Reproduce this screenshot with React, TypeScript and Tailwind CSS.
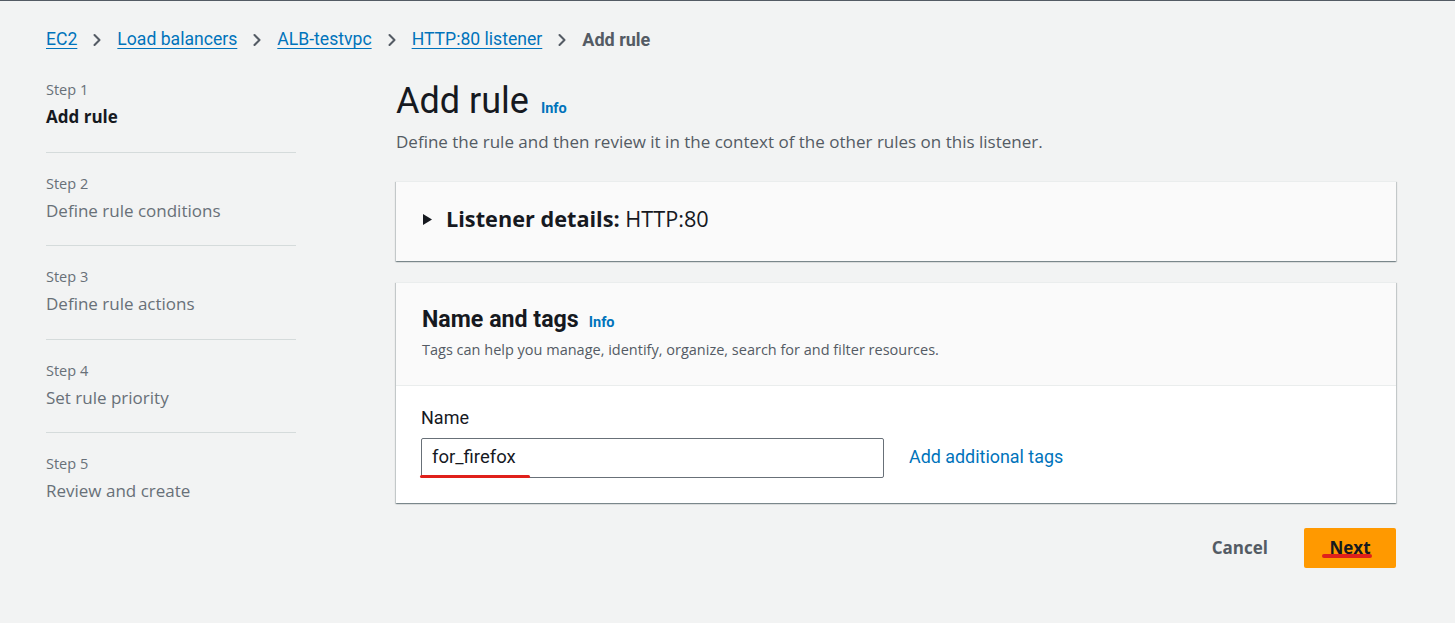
import { ChevronRight } from 'lucide-react';

const STEPS = [
  { n: 1, label: 'Add rule', active: true },
  { n: 2, label: 'Define rule conditions' },
  { n: 3, label: 'Define rule actions' },
  { n: 4, label: 'Set rule priority' },
  { n: 5, label: 'Review and create' },
];

const CRUMBS = ['EC2', 'Load balancers', 'ALB-testvpc', 'HTTP:80 listener'];

const ember = "font-['Roboto','Liberation_Sans',sans-serif]";
const open = "font-['Open_Sans','Liberation_Sans',sans-serif]";
const panel =
  'bg-[#fafafa] border-t border-[#eaeded] shadow-[0_1px_1px_0_rgba(0,28,36,0.3),1px_1px_1px_0_rgba(0,28,36,0.15),-1px_1px_1px_0_rgba(0,28,36,0.15)]';

export default function App() {
  return (
    <div className="min-h-[623px] bg-[#f2f3f3] border-t border-[#545b64] text-[#16191f]">
      <nav className={`flex items-center pl-[46px] pt-[26px] h-[51px] text-[17.6px] ${ember}`}>
        {CRUMBS.map((c) => (
          <span key={c} className="flex items-center">
            <a className="text-[#0073bb] underline underline-offset-[3px]">{c}</a>
            <ChevronRight className="mx-[10px] w-[20px] h-[20px] text-[#545b64]" strokeWidth={2.5} />
          </span>
        ))}
        <span className="font-bold text-[#545b64] text-[18px]">Add rule</span>
      </nav>

      <div className="flex pl-[46px] pt-[27px]">
        <ol className={`w-[250px] shrink-0 ${open}`}>
          {STEPS.map((s, i) => (
            <li
              key={s.n}
              className={`${i > 0 ? 'border-t border-[#d5dbdb] pt-[20px]' : ''} ${i < 4 ? 'pb-[22.6px]' : ''}`}
            >
              <div className="text-[14.5px] leading-[22px] text-[#687078]">Step {s.n}</div>
              <div
                className={`mt-[4px] text-[17px] leading-[24px] ${s.active ? 'font-bold text-[#16191f]' : 'text-[#687078]'}`}
              >
                {s.label}
              </div>
            </li>
          ))}
        </ol>

        <main className="ml-[100px] w-[1000px]">
          <div className="flex items-baseline gap-[12px]">
            <h1 className={`text-[36px] leading-[44px] font-normal ${ember}`}>Add rule</h1>
            <a className={`text-[14.5px] font-bold text-[#0073bb] ${ember}`}>Info</a>
          </div>
          <p className={`mt-[8px] text-[17px] leading-[22px] text-[#545b64] ${open}`}>
            Define the rule and then review it in the context of the other rules on this listener.
          </p>

          <section className={`${panel} mt-[28px] h-[80px] flex items-center pl-[26px] pb-[4px]`}>
            <svg width="11" height="13" viewBox="0 0 11 13" className="mr-[13px]">
              <path d="M1 1 L10 6.5 L1 12 Z" fill="#16191f" />
            </svg>
            <span className={`text-[21.7px] ${open}`}>
              <b>Listener details:</b> HTTP:80
            </span>
          </section>

          <section className={`${panel} mt-[21px]`}>
            <div className="px-[26px] pt-[22px] pb-[25px] border-b border-[#eaeded]">
              <div className="flex items-baseline gap-[10px]">
                <h2 className={`text-[23.2px] leading-[28px] font-bold ${ember}`}>Name and tags</h2>
                <a className={`text-[14.5px] font-bold text-[#0073bb] ${ember}`}>Info</a>
              </div>
              <p className={`mt-[6px] text-[14.5px] leading-[20px] text-[#545b64] ${open}`}>
                Tags can help you manage, identify, organize, search for and filter resources.
              </p>
            </div>
            <div className="bg-white px-[25px] pt-[20px] pb-[25px]">
              <label className={`block text-[18px] leading-[24px] ${ember}`}>Name</label>
              <div className="mt-[8px] flex items-center">
                <div className="relative w-[463px] h-[40px] border border-[#687078] rounded-[2px] bg-white flex items-center pl-[10px]">
                  <span className={`text-[18.5px] ${ember}`}>for_firefox</span>
                  <span className="absolute left-[-2px] top-[36px] w-[110px] h-[3px] rounded-full bg-[#e0201b]" />
                </div>
                <a className={`ml-[25px] text-[17.9px] text-[#0073bb] ${ember}`}>Add additional tags</a>
              </div>
            </div>
          </section>

          <div className="mt-[25px] flex justify-end items-center">
            <button className={`text-[17px] font-bold text-[#545b64] mr-[36px] ${open}`}>Cancel</button>
            <button
              className={`relative w-[92px] h-[40px] rounded-[2px] bg-[#ff9900] text-[17px] font-bold text-[#16191f] ${open}`}
            >
              Next
              <span className="absolute left-[18px] top-[26px] w-[50px] h-[4px] rounded-full bg-[#e0201b]" />
            </button>
          </div>
        </main>
      </div>
    </div>
  );
}
